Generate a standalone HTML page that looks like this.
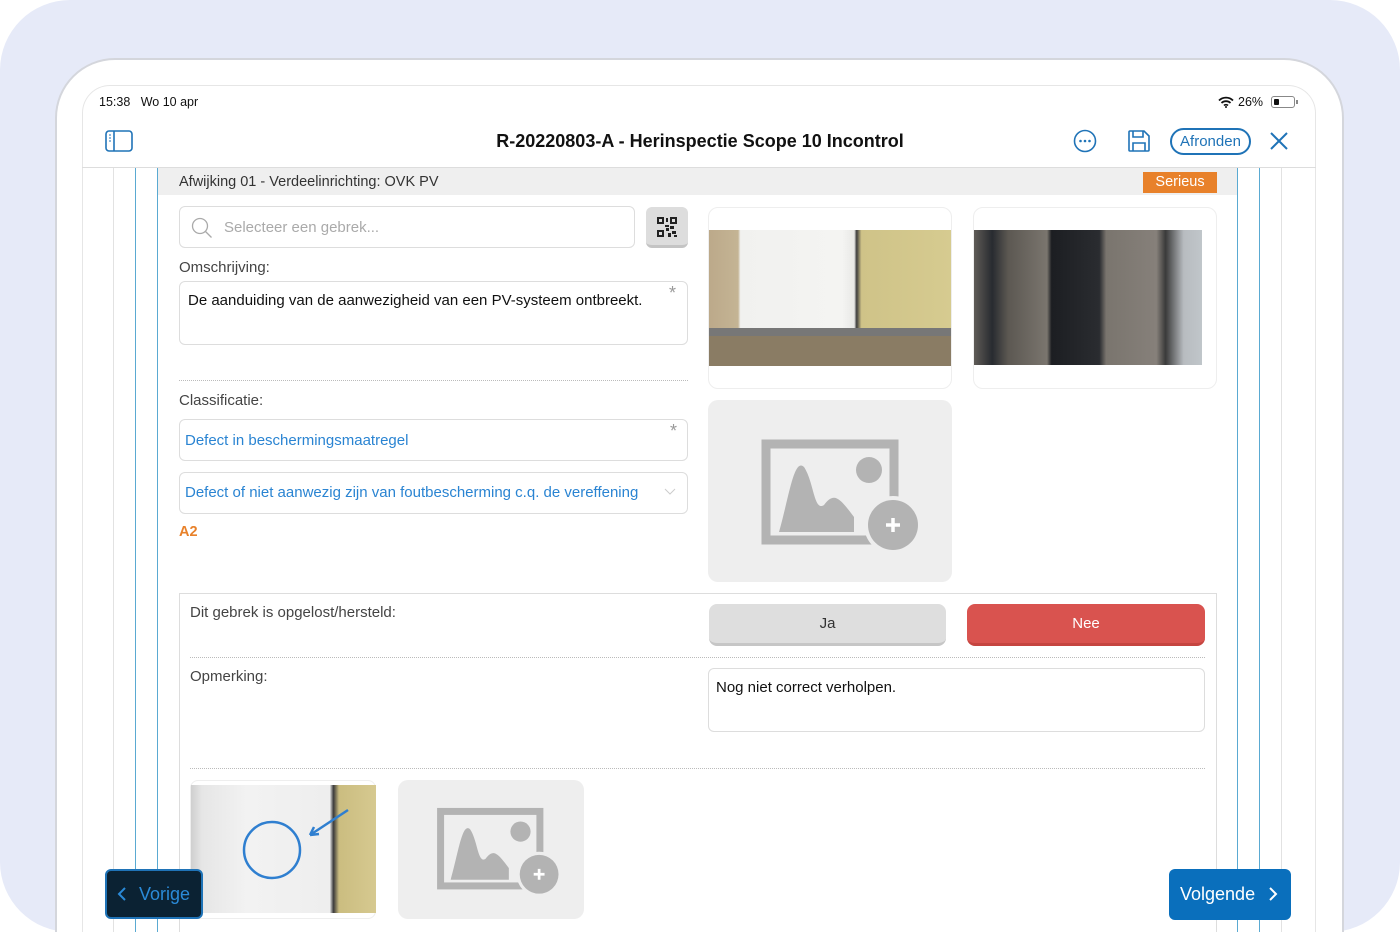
<!DOCTYPE html>
<html><head><meta charset="utf-8"><style>
*{margin:0;padding:0;box-sizing:border-box}
html,body{width:1400px;height:932px;overflow:hidden}
body{background:#fff;font-family:"Liberation Sans",sans-serif;position:relative;color:#222}
#w{position:absolute;left:0;top:0;width:1400px;height:932px;overflow:hidden}
.a{position:absolute}
.vl{position:absolute;top:168px;height:764px;width:1px}
.inp{position:absolute;border:1px solid #ddd;border-radius:6px;background:#fff}
.lbl{position:absolute;font-size:15px;color:#444}
.dots{position:absolute;height:0;border-top:1px dotted #bbb}
.blue{color:#2a84d2}
</style></head><body><div id="w">
<div class="a" style="left:0;top:0;width:1400px;height:932px;background:#e6eaf8;border-radius:70px"></div>
<div class="a" style="left:55px;top:58px;width:1289px;height:874px;background:#fff;border:2px solid #d4d6dc;border-bottom:none;border-radius:60px 60px 0 0"></div>
<div class="a" style="left:82px;top:85px;width:1234px;height:847px;background:#fff;border:1px solid #e6e6e6;border-bottom:none;border-radius:28px 28px 0 0"></div>
<div class="a" style="left:99px;top:95px;font-size:12.5px;color:#111">15:38&nbsp;&nbsp;&nbsp;Wo 10 apr</div>
<svg class="a" style="left:1218px;top:96px" width="16" height="12" viewBox="0 0 16 12"><path d="M1 4.5a10 10 0 0 1 14 0M3.5 7a6.5 6.5 0 0 1 9 0M6 9.5a3 3 0 0 1 4 0" stroke="#111" stroke-width="1.8" fill="none"/><circle cx="8" cy="11" r="1" fill="#111"/></svg>
<div class="a" style="left:1238px;top:95px;font-size:12.5px;color:#111">26%</div>
<div class="a" style="left:1271px;top:96px;width:24px;height:12px;border:1px solid #888;border-radius:3px"><div style="margin:2px;width:5px;height:6px;background:#111;border-radius:1px"></div></div>
<div class="a" style="left:1296px;top:100px;width:2px;height:4px;background:#888"></div>
<svg class="a" style="left:105px;top:130px" width="28" height="22" viewBox="0 0 28 22"><rect x="1" y="1" width="26" height="20" rx="3" fill="none" stroke="#1f73b7" stroke-width="1.6"/><line x1="9" y1="1" x2="9" y2="21" stroke="#1f73b7" stroke-width="1.6"/><path d="M4 5h2M4 8h2M4 11h2" stroke="#1f73b7" stroke-width="1"/></svg>
<div class="a" style="left:0;width:1400px;top:131px;text-align:center;font-size:18px;font-weight:bold;color:#111">R-20220803-A - Herinspectie Scope 10 Incontrol</div>
<svg class="a" style="left:1073px;top:129px" width="24" height="24" viewBox="0 0 24 24"><circle cx="12" cy="12" r="10.5" fill="none" stroke="#1f73b7" stroke-width="1.6"/><circle cx="7.5" cy="12" r="1.3" fill="#1f73b7"/><circle cx="12" cy="12" r="1.3" fill="#1f73b7"/><circle cx="16.5" cy="12" r="1.3" fill="#1f73b7"/></svg>
<svg class="a" style="left:1127px;top:129px" width="24" height="24" viewBox="0 0 24 24"><path d="M2 3a1 1 0 0 1 1-1h14l5 5v14a1 1 0 0 1-1 1H3a1 1 0 0 1-1-1z" fill="none" stroke="#1f73b7" stroke-width="1.6"/><path d="M6 2v6h10V2M6 22v-8h12v8" fill="none" stroke="#1f73b7" stroke-width="1.6"/></svg>
<div class="a" style="left:1170px;top:128px;width:81px;height:27px;border:2px solid #1f73b7;border-radius:14px;color:#1f73b7;font-size:15px;text-align:center;line-height:23px">Afronden</div>
<svg class="a" style="left:1269px;top:131px" width="20" height="20" viewBox="0 0 20 20"><path d="M2 2l16 16M18 2L2 18" stroke="#1f73b7" stroke-width="2"/></svg>
<div class="a" style="left:82px;top:167px;width:1234px;height:1px;background:#ddd"></div>
<div class="vl" style="left:113px;background:#e2e2e2"></div>
<div class="vl" style="left:135px;background:#5aaad2"></div>
<div class="vl" style="left:157px;background:#5aaad2"></div>
<div class="vl" style="left:1237px;background:#5aaad2"></div>
<div class="vl" style="left:1259px;background:#5aaad2"></div>
<div class="vl" style="left:1281px;background:#e2e2e2"></div>
<div class="a" style="left:158px;top:168px;width:1079px;height:27px;background:#efefef"></div>
<div class="a" style="left:179px;top:174px;font-size:14.5px;color:#333">Afwijking 01 - Verdeelinrichting: OVK PV</div>
<div class="a" style="left:1143px;top:172px;width:74px;height:21px;background:#e8812a;color:#fff;font-size:14.5px;text-align:center;line-height:21px">Serieus</div>
<div class="inp" style="left:179px;top:206px;width:456px;height:42px"></div>
<svg class="a" style="left:191px;top:217px" width="22" height="22" viewBox="0 0 22 22"><circle cx="9" cy="9" r="7.5" fill="none" stroke="#aaa" stroke-width="1.3"/><path d="M14.5 14.5l6 6" stroke="#aaa" stroke-width="1.3"/></svg>
<div class="a" style="left:224px;top:219px;font-size:15px;color:#aaa">Selecteer een gebrek...</div>
<div class="a" style="left:646px;top:207px;width:42px;height:41px;background:#ddd;border-radius:6px;border-bottom:3px solid #c4c4c4"></div>
<svg class="a" style="left:656px;top:216px" width="22" height="22" viewBox="0 0 22 22" fill="#222"><path d="M1 1h7v7H1zM3 3v3h3V3zM14 1h7v7h-7zM16 3v3h3V3zM1 14h7v7H1zM3 16v3h3v-3zM10 2h2v4h-2zM9 9h4v2H9zM10 12h3v3h-3zM14 10h4v3h-4zM16 15h4v3h-4zM12 17h3v4h-3zM18 19h3v2h-3z"/></svg>
<div class="lbl" style="left:179px;top:259px">Omschrijving:</div>
<div class="inp" style="left:179px;top:281px;width:509px;height:64px"></div>
<div class="a" style="left:188px;top:292px;font-size:15px;color:#111">De aanduiding van de aanwezigheid van een PV-systeem ontbreekt.</div>
<div class="a" style="left:669px;top:283px;font-size:18px;color:#999">*</div>
<div class="dots" style="left:179px;top:380px;width:509px"></div>
<div class="lbl" style="left:179px;top:392px">Classificatie:</div>
<div class="inp" style="left:179px;top:419px;width:509px;height:42px"></div>
<div class="a blue" style="left:185px;top:432px;font-size:15px">Defect in beschermingsmaatregel</div>
<div class="a" style="left:670px;top:421px;font-size:18px;color:#999">*</div>
<div class="inp" style="left:179px;top:472px;width:509px;height:42px"></div>
<div class="a blue" style="left:185px;top:484px;font-size:15px">Defect of niet aanwezig zijn van foutbescherming c.q. de vereffening</div>
<svg class="a" style="left:664px;top:488px" width="12" height="8" viewBox="0 0 12 8"><path d="M1 1l5 5 5-5" stroke="#ccc" fill="none"/></svg>
<div class="a" style="left:179px;top:524px;font-size:14.5px;font-weight:bold;color:#e8812a">A2</div>
<div class="a" style="left:708px;top:207px;width:244px;height:182px;border:1px solid #eee;border-radius:10px"></div>
<div class="a" style="left:709px;top:230px;width:242px;height:136px;background:linear-gradient(90deg,#bca98a 0%,#c4b494 12%,#f1f1ef 13%,#f4f4f2 55%,#e8e8e6 60%,#3c3c3c 61%,#cfc388 63%,#d6cb90 100%)"><div style="position:absolute;left:0;top:98px;width:242px;height:8px;background:#777"></div><div style="position:absolute;left:0;top:106px;width:242px;height:30px;background:#8a7c64"></div></div>
<div class="a" style="left:973px;top:207px;width:244px;height:182px;border:1px solid #eee;border-radius:10px"></div>
<div class="a" style="left:974px;top:230px;width:228px;height:135px;background:linear-gradient(90deg,#605c57 0%,#282b30 8%,#5c5852 15%,#7a756e 32%,#1c1e22 34%,#2a2c30 55%,#7a756e 58%,#86807a 80%,#3a3a3a 84%,#b8bcc0 92%,#c0c6ca 100%)"></div>
<div class="a" style="left:708px;top:400px;width:244px;height:182px;background:#eeeeee;border-radius:10px"></div>
<svg class="a" style="left:759px;top:437px" width="162" height="116" viewBox="0 0 162 116"><rect x="7" y="7" width="128" height="96" fill="none" stroke="#b3b3b3" stroke-width="9"/><path d="M20 95C30 60 35 20 45 30 55 45 55 75 65 68 75 55 80 60 95 80L95 95z" fill="#b3b3b3"/><circle cx="110" cy="33" r="13" fill="#b3b3b3"/><circle cx="134" cy="88" r="29" fill="#eeeeee"/><circle cx="134" cy="88" r="25" fill="#b3b3b3"/><path d="M134 81v14M127 88h14" stroke="#fff" stroke-width="3.5"/></svg>
<div class="a" style="left:179px;top:593px;width:1038px;height:339px;border:1px solid #ddd;border-bottom:none"></div>
<div class="lbl" style="left:190px;top:604px">Dit gebrek is opgelost/hersteld:</div>
<div class="a" style="left:709px;top:604px;width:237px;height:42px;background:#dedede;border-radius:8px;border-bottom:3px solid #c6c6c6;text-align:center;line-height:40px;font-size:15px;color:#333">Ja</div>
<div class="a" style="left:967px;top:604px;width:238px;height:42px;background:#d9534f;border-radius:8px;border-bottom:3px solid #c54540;text-align:center;line-height:40px;font-size:15px;color:#fff">Nee</div>
<div class="dots" style="left:190px;top:657px;width:1015px"></div>
<div class="lbl" style="left:190px;top:668px">Opmerking:</div>
<div class="inp" style="left:708px;top:668px;width:497px;height:64px"></div>
<div class="a" style="left:716px;top:679px;font-size:15px;color:#111">Nog niet correct verholpen.</div>
<div class="dots" style="left:190px;top:768px;width:1015px"></div>
<div class="a" style="left:190px;top:780px;width:186px;height:139px;border:1px solid #eee;border-radius:8px"></div>
<div class="a" style="left:191px;top:785px;width:185px;height:128px;background:linear-gradient(90deg,#cfcfcf 0%,#e6e6e6 6%,#f2f2f2 30%,#eeeeee 75%,#3a3a3a 77%,#cbbd80 80%,#d6c990 100%)"></div>
<svg class="a" style="left:240px;top:805px" width="115" height="80" viewBox="0 0 115 80"><circle cx="32" cy="45" r="28" fill="none" stroke="#2f7fd0" stroke-width="2.5"/><path d="M108 5L70 30M70 30l9-1M70 30l4-8" stroke="#2f7fd0" stroke-width="2.5" fill="none"/></svg>
<div class="a" style="left:398px;top:780px;width:186px;height:139px;background:#eeeeee;border-radius:10px"></div>
<svg class="a" style="left:435px;top:806px" width="126" height="90" viewBox="0 0 162 116"><rect x="7" y="7" width="128" height="96" fill="none" stroke="#b3b3b3" stroke-width="9"/><path d="M20 95C30 60 35 20 45 30 55 45 55 75 65 68 75 55 80 60 95 80L95 95z" fill="#b3b3b3"/><circle cx="110" cy="33" r="13" fill="#b3b3b3"/><circle cx="134" cy="88" r="29" fill="#eeeeee"/><circle cx="134" cy="88" r="25" fill="#b3b3b3"/><path d="M134 81v14M127 88h14" stroke="#fff" stroke-width="3.5"/></svg>
<div class="a" style="left:105px;top:869px;width:98px;height:50px;background:#0b2233;border:2px solid #1f73b7;border-radius:6px;color:#2a8ad8;font-size:18px;line-height:46px;padding-left:32px">Vorige</div>
<svg class="a" style="left:117px;top:886px" width="10" height="16" viewBox="0 0 10 16"><path d="M8 2L2 8l6 6" stroke="#2a8ad8" stroke-width="2" fill="none"/></svg>
<div class="a" style="left:1169px;top:869px;width:122px;height:51px;background:#0a6fbc;border-radius:6px;color:#fff;font-size:18px;line-height:51px;padding-left:11px">Volgende</div>
<svg class="a" style="left:1268px;top:886px" width="10" height="16" viewBox="0 0 10 16"><path d="M2 2l6 6-6 6" stroke="#fff" stroke-width="2" fill="none"/></svg>
</div></body></html>
